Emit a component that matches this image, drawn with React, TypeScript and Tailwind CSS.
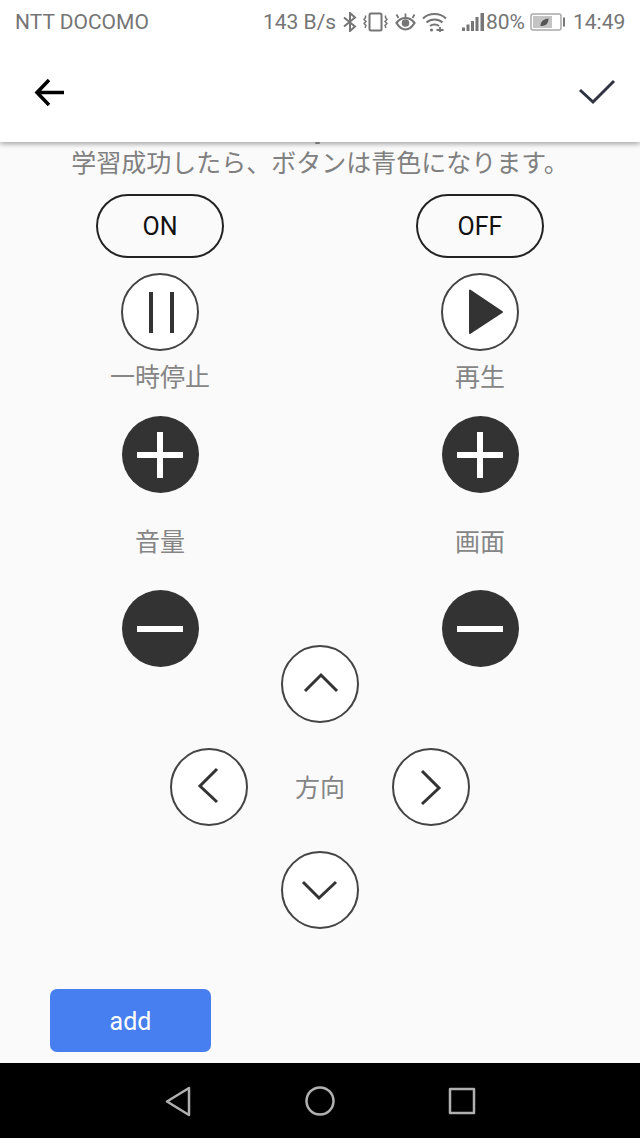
const dark = "#333333";
const grey = "#757575";

function StatusBar() {
  return (
    <div className="relative z-20 flex h-[44px] items-center whitespace-nowrap bg-white pl-[15px] text-[21px] leading-[44px] text-[#757575] [font-family:Roboto,sans-serif]">
      <span className="w-[134px] shrink-0">NTT DOCOMO</span>
      <span className="ml-[114px] w-[73px] shrink-0">143 B/s</span>
      {/* bluetooth */}
      <svg className="ml-[7px] shrink-0" width="14" height="20" viewBox="0 0 14 20" fill="none" stroke={grey} strokeWidth="2">
        <path d="M1 5.500 12 14.500 7 19V1l5 4.500L1 14.500" />
      </svg>
      {/* vibrate */}
      <svg className="ml-[6px] shrink-0" width="25" height="20" viewBox="0 0 25 20" fill="none" stroke={grey} strokeWidth="2">
        <rect x="6.500" y="1.500" width="12" height="17" rx="1.500" />
        <path d="M2.500 3.500v2l-1.500 2 2 2-2 2 2 2-1 2.500M22.500 3.500v2l1.500 2-2 2 2 2-2 2 1 2.500" strokeWidth="1.500" />
      </svg>
      {/* eye comfort */}
      <svg className="ml-[7px] shrink-0" width="21" height="20" viewBox="0 0 21 20" fill="none" stroke={grey} strokeWidth="2.200">
        <path d="M1.500 11c2.500-3.500 5-5 9-5s6.500 1.500 9 5c-2.500 4-5 6.500-9 6.500S4 15 1.500 11Z" />
        <circle cx="10.500" cy="11" r="3.800" fill={grey} stroke="none" />
        <path d="M3.500 6 1.500 2.500M10.500 5V1.500M17.500 6l2-3.500" strokeWidth="1.800" />
      </svg>
      {/* wifi */}
      <svg className="ml-[6px] shrink-0" width="25" height="20" viewBox="0 0 25 20" fill="none" stroke={grey} strokeWidth="2">
        <path d="M1 6.500C7 .5 18 .5 24 6.500M4.500 10.500c4.500-4 11.500-4 16 0M8 14c2.500-2 6.500-2 9 0" />
        <circle cx="9.500" cy="18" r="1.600" fill={grey} stroke="none" />
        <path d="M14.500 18h7M18 15v5" strokeWidth="1.800" />
      </svg>
      {/* signal */}
      <svg className="ml-[15px] shrink-0" width="22" height="20" viewBox="0 0 22 20" fill={grey}>
        <rect x="0" y="15.500" width="3" height="3.500" />
        <rect x="4.500" y="12.500" width="3" height="6.500" />
        <rect x="9" y="9" width="3" height="10" />
        <rect x="13.500" y="5" width="3" height="14" />
        <rect x="18.500" y="1" width="3.500" height="18" />
      </svg>
      <span className="ml-[2px] w-[38px] shrink-0">80%</span>
      {/* battery saver */}
      <svg className="ml-[6px] shrink-0" width="35" height="18" viewBox="0 0 35 18" fill="none">
        <rect x="1" y="1" width="30" height="16" rx="2" stroke="#a8a8a8" strokeWidth="1.500" />
        <rect x="3" y="3" width="19" height="12" fill="#c4c4c4" />
        <path d="M10.500 13c0-4.500 3-7 8-7.500 0 5-2.500 7.500-8 7.500Z" fill="#555555" />
        <rect x="33" y="4.500" width="2.500" height="9" fill={grey} />
      </svg>
      <span className="ml-[8px] shrink-0">14:49</span>
    </div>
  );
}

function AppBar() {
  return (
    <div className="relative z-10 flex h-[98px] items-center justify-between bg-white pl-[32px] pr-[23px] shadow-[0_2px_5px_rgba(0,0,0,0.35)]">
      <svg width="36" height="36" viewBox="0 0 36 36" fill="none" stroke="#000000" strokeWidth="3.500">
        <path d="M32 17.500H6M17 5 5 17.500 17 30" />
      </svg>
      <svg width="40" height="30" viewBox="0 0 40 30" fill="none" stroke="#2f3440" strokeWidth="3">
        <path d="M3 12l13 12L37 3" />
      </svg>
      {/* tail of the scrolled-away line */}
      <span className="absolute -bottom-[2px] left-[315px] h-[2px] w-[5px] rounded-full bg-[#777777]" />
    </div>
  );
}

function Pill({ label }: { label: string }) {
  return (
    <button className="h-[64px] w-[128px] rounded-full border-2 border-[#222222] pt-[2px] text-[25px] text-[#111111] [font-family:Roboto,sans-serif]">
      {label}
    </button>
  );
}

function Round({ filled, children }: { filled?: boolean; children: React.ReactNode }) {
  return filled ? (
    <div className="flex h-[77px] w-[77px] items-center justify-center rounded-full bg-[#333333]">{children}</div>
  ) : (
    <div className="flex h-[78px] w-[78px] items-center justify-center rounded-full border-2 border-[#444444] bg-white">
      {children}
    </div>
  );
}

function Label({ text }: { text: string }) {
  return <div className="text-[25px] leading-[32px] text-[#858585]">{text}</div>;
}

const PlusIcon = () => (
  <svg width="46" height="46" viewBox="0 0 46 46" fill="#ffffff">
    <rect x="0" y="20" width="46" height="6" />
    <rect x="20" y="0" width="6" height="46" />
  </svg>
);

const MinusIcon = () => (
  <svg width="46" height="6" viewBox="0 0 46 6" fill="#ffffff">
    <rect width="46" height="6" />
  </svg>
);

function Chevron({ d }: { d: string }) {
  return (
    <svg width="40" height="40" viewBox="0 0 40 40" fill="none" stroke={dark} strokeWidth="3">
      <path d={d} />
    </svg>
  );
}

function VolumeColumn({ label }: { label: string }) {
  return (
    <div className="flex flex-col items-center">
      <Round filled>
        <PlusIcon />
      </Round>
      <div className="mt-[31px] mb-[34px]">
        <Label text={label} />
      </div>
      <Round filled>
        <MinusIcon />
      </Round>
    </div>
  );
}

function DirectionPad() {
  return (
    <div className="-mt-[22px] flex flex-col items-center">
      <Round>
        <Chevron d="M5 27 21 11l16 16" />
      </Round>
      <div className="mt-[25px] flex w-[300px] items-center justify-between">
        <Round>
          <Chevron d="M28 2 11 19l17 16" />
        </Round>
        <div className="pb-[2px]">
          <Label text="方向" />
        </div>
        <Round>
          <Chevron d="M11 4l17 17-17 16" />
        </Round>
      </div>
      <div className="mt-[25px]">
        <Round>
          <Chevron d="M3 12l16 16 17-16" />
        </Round>
      </div>
    </div>
  );
}

function NavBar() {
  return (
    <div className="flex h-[75px] items-center justify-center gap-[112px] bg-black">
      <svg width="30" height="32" viewBox="0 0 30 32" fill="none" stroke="#b0b0b0" strokeWidth="2.500" strokeLinejoin="round">
        <path d="M26 3v27L4 16.500Z" />
      </svg>
      <svg width="30" height="30" viewBox="0 0 30 30" fill="none" stroke="#b0b0b0" strokeWidth="2.500">
        <circle cx="15" cy="15" r="13.500" />
      </svg>
      <svg width="30" height="30" viewBox="0 0 30 30" fill="none" stroke="#b0b0b0" strokeWidth="2.500" strokeLinejoin="round">
        <rect x="3" y="3" width="24" height="24" />
      </svg>
    </div>
  );
}

export default function App() {
  return (
    <div className="flex h-[1138px] w-[640px] flex-col overflow-hidden bg-[#fafafa] [font-family:'Noto_Sans_CJK_JP',sans-serif]">
      <StatusBar />
      <AppBar />

      {/* Content */}
      <div className="flex-1">
        <div className="mt-[3px] text-center text-[25px] leading-[32px] text-[#808080]">
          学習成功したら、ボタンは青色になります。
        </div>

        <div className="mt-[17px] grid grid-cols-2 justify-items-center">
          <Pill label="ON" />
          <Pill label="OFF" />
        </div>

        <div className="mt-[15px] grid grid-cols-2 justify-items-center">
          <div className="flex flex-col items-center gap-[8px]">
            <Round>
              <svg width="40" height="44" viewBox="0 0 40 44" fill={dark}>
                <rect x="9" y="2" width="4" height="41" />
                <rect x="30" y="2" width="4" height="41" />
              </svg>
            </Round>
            <Label text="一時停止" />
          </div>
          <div className="flex flex-col items-center gap-[8px]">
            <Round>
              <svg width="50" height="50" viewBox="0 0 50 50" fill={dark} stroke={dark} strokeWidth="2" strokeLinejoin="round">
                <path d="M15 3.500V46l32-21Z" />
              </svg>
            </Round>
            <Label text="再生" />
          </div>
        </div>

        <div className="mt-[25px] grid grid-cols-2 justify-items-center">
          <VolumeColumn label="音量" />
          <VolumeColumn label="画面" />
        </div>

        <DirectionPad />

        <button className="ml-[50px] mt-[60px] h-[63px] w-[161px] rounded-[7px] bg-[#477ff0] pt-[2px] text-[25px] text-white [font-family:Roboto,sans-serif]">
          add
        </button>
      </div>

      <NavBar />
    </div>
  );
}
